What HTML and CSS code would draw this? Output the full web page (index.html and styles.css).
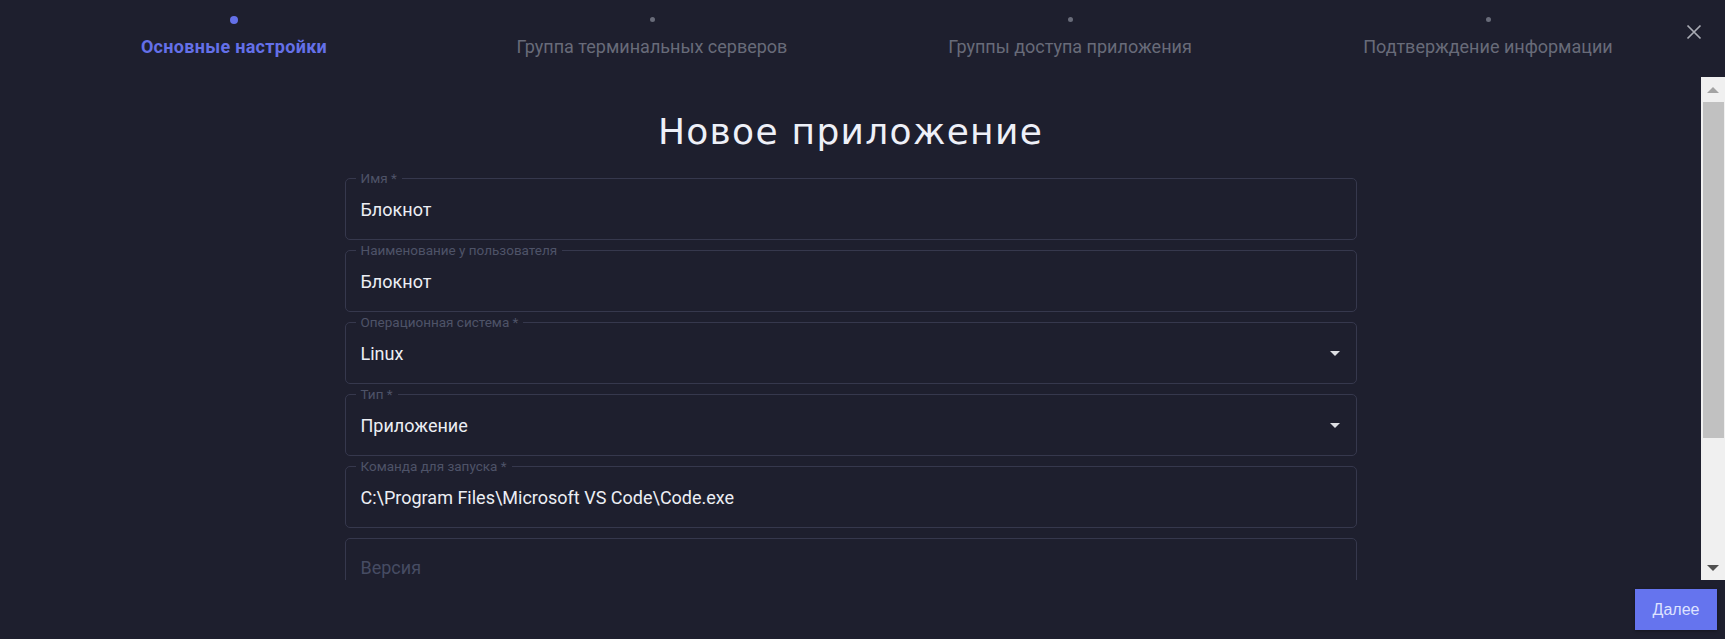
FILE: index.html
```html
<!DOCTYPE html>
<html>
<head>
    <meta charset="UTF-8">
    <title>Новое приложение</title>
    <link rel="stylesheet" href="styles.css">
</head>
<body>
<div class="wizard">
    <div class="wizard-head">
        <ol class="steps">
            <li class="step step-active">
                <span class="step-dot"></span>
                <span class="step-name">Основные настройки</span>
            </li>
            <li class="step">
                <span class="step-dot"></span>
                <span class="step-name">Группа терминальных серверов</span>
            </li>
            <li class="step">
                <span class="step-dot"></span>
                <span class="step-name">Группы доступа приложения</span>
            </li>
            <li class="step">
                <span class="step-dot"></span>
                <span class="step-name">Подтверждение информации</span>
            </li>
        </ol>
        <button class="close-btn" type="button" aria-label="Закрыть">
            <svg width="16" height="16" viewBox="0 0 16 16">
                <path d="M1.5 1.5 L14.5 14.5 M14.5 1.5 L1.5 14.5" stroke="currentColor" stroke-width="1.7" fill="none"/>
            </svg>
        </button>
    </div>

    <div class="wizard-main">
        <div class="wizard-body">
            <h1 class="page-title">Новое приложение</h1>
            <form class="app-form">
                <div class="field">
                    <span class="field-label">Имя *</span>
                    <span class="field-value">Блокнот</span>
                </div>
                <div class="field">
                    <span class="field-label">Наименование у пользователя</span>
                    <span class="field-value">Блокнот</span>
                </div>
                <div class="field field-select">
                    <span class="field-label">Операционная система *</span>
                    <span class="field-value">Linux</span>
                    <span class="select-arrow"></span>
                </div>
                <div class="field field-select">
                    <span class="field-label">Тип *</span>
                    <span class="field-value">Приложение</span>
                    <span class="select-arrow"></span>
                </div>
                <div class="field">
                    <span class="field-label">Команда для запуска *</span>
                    <span class="field-value">C:\Program Files\Microsoft VS Code\Code.exe</span>
                </div>
                <div class="field">
                    <span class="field-placeholder">Версия</span>
                </div>
            </form>
        </div>
        <!-- полоса прокрутки в стиле Windows -->
        <div class="scrollbar">
            <span class="sb-btn sb-up"></span>
            <div class="sb-track">
                <span class="sb-thumb" style="height:336px"></span>
            </div>
            <span class="sb-btn sb-down"></span>
        </div>
    </div>

    <div class="wizard-foot">
        <button class="next-btn" type="button">Далее</button>
    </div>
</div>
</body>
</html>
```

FILE: styles.css
```css
html,body{margin:0;padding:0;height:100%;}
body{background:#1e1f2e;font-family:Roboto,"Noto Sans",sans-serif;color:#eceef4;overflow:hidden;}

.wizard{display:flex;flex-direction:column;height:639px;}

/* шаги мастера */
.wizard-head{position:relative;height:77px;flex:none;}
.steps{list-style:none;margin:0;padding:16px 28px 0 25px;display:grid;grid-template-columns:repeat(4,1fr);}
.step{display:flex;flex-direction:column;align-items:center;gap:10px;color:#686b79;}
.step-dot{width:5px;height:5px;border-radius:50%;background:#686b79;margin:1px 0 2px;}
.step-name{font-size:18px;line-height:25px;white-space:nowrap;}
.step-active{color:#6470e8;}
.step-active .step-dot{width:8px;height:8px;margin:0;background:#6470e8;}
.step-active .step-name{font-weight:700;letter-spacing:0.3px;}

.close-btn{position:absolute;top:24px;right:23px;width:16px;height:16px;padding:0;border:0;background:none;color:#a9abb4;cursor:pointer;}
.close-btn svg{display:block;}

/* прокручиваемая часть */
.wizard-main{height:503px;flex:none;display:flex;}
.wizard-body{flex:1;overflow-y:auto;scrollbar-width:none;}
.wizard-body::-webkit-scrollbar{display:none;}

.scrollbar{width:24px;flex:none;background:#f0f0f0;display:flex;flex-direction:column;}
.sb-btn{height:25px;flex:none;display:flex;align-items:center;justify-content:center;}
.sb-btn::after{content:"";width:0;height:0;border-left:6px solid transparent;border-right:6px solid transparent;}
.sb-up::after{border-bottom:6px solid #a3a3a3;}
.sb-down::after{border-top:6px solid #505050;}
.sb-track{flex:1;padding:0 1px 0 2px;}
.sb-thumb{display:block;background:#c1c1c1;}

.page-title{margin:0;padding:30px 0 21px;text-align:center;font-family:"DejaVu Sans",sans-serif;font-weight:400;font-size:36px;line-height:50px;color:#eef0f8;letter-spacing:1.3px;}

.app-form{width:1012px;margin:0 auto;padding-bottom:100px;display:flex;flex-direction:column;gap:10px;}

.field{position:relative;height:62px;box-sizing:border-box;border:1px solid #36384d;border-radius:5px;display:flex;align-items:center;padding:0 15px;}
.field-label{position:absolute;top:-10px;left:10px;padding:0 5px;background:#1e1f2e;font-size:13.5px;line-height:18px;color:#4e5368;white-space:nowrap;}
.field-value{font-size:18px;color:#eceef4;}
.field-placeholder{font-size:18px;line-height:18px;color:#464c63;margin-top:-3px;}
.field-select{justify-content:space-between;}
.select-arrow{width:0;height:0;border-left:5px solid transparent;border-right:5px solid transparent;border-top:5px solid #dedfe4;margin-right:1px;}

/* нижняя панель */
.wizard-foot{flex:1;display:flex;justify-content:flex-end;align-items:flex-start;padding:9px 8px 0 0;}
.next-btn{width:82px;height:41px;border:0;background:#6574ee;color:#dfe3ff;font-family:"Liberation Sans",Arial,sans-serif;font-size:16px;box-shadow:0 1px 3px rgba(0,0,0,0.35);cursor:pointer;}
```
